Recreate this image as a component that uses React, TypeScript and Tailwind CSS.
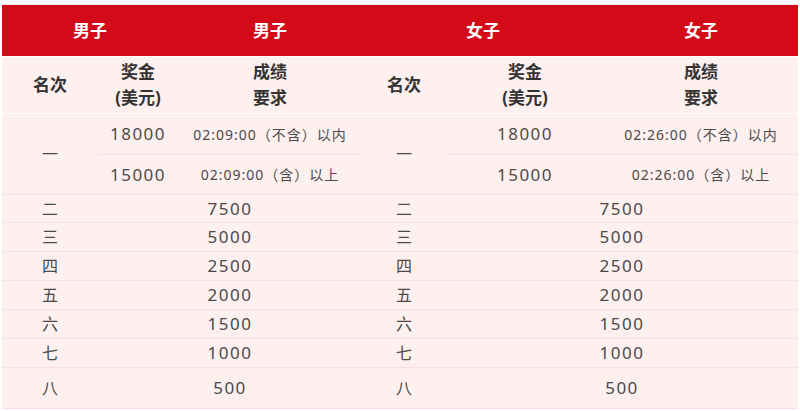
const FONT = "font-['Noto_Sans','Noto_Sans_CJK_SC',sans-serif]";

const ranks = [
  { rank: "二", prize: "7500", h: "h-[28px]" },
  { rank: "三", prize: "5000", h: "h-[29px]" },
  { rank: "四", prize: "2500", h: "h-[29px]" },
  { rank: "五", prize: "2000", h: "h-[29px]" },
  { rank: "六", prize: "1500", h: "h-[29px]" },
  { rank: "七", prize: "1000", h: "h-[29px]" },
  { rank: "八", prize: "500", h: "h-[41px]" },
];

const head = "bg-[#d30a18] text-white text-[17px] font-bold text-center align-middle h-[52px] border-b border-white p-0";
const sub = "bg-[#fff0f0] text-[#333] text-[17px] font-bold text-center align-middle leading-[26px] h-[57px] border-b border-white p-0";
const cell = "bg-[#fff0f0] text-[#4a4a4a] text-center align-middle p-0 border-b border-[#fcdede]";
const num = "text-[17px] tracking-[1.5px]";
const time = "text-[14px] tracking-[1px]";

export default function App() {
  return (
    <div className={`w-[800px] h-[411px] bg-white pt-[4px] px-[2px] ${FONT}`}>
      <table className="w-[796px] table-fixed border-collapse border-t border-[#e8e8e8]">
        <colgroup>
          <col className="w-[96px]" />
          <col className="w-[80px]" />
          <col className="w-[184px]" />
          <col className="w-[84px]" />
          <col className="w-[158px]" />
          <col className="w-[194px]" />
        </colgroup>
        <thead>
          <tr>
            <th colSpan={2} className={head}>男子</th>
            <th className={head}>男子</th>
            <th colSpan={2} className={head}>女子</th>
            <th className={head}>女子</th>
          </tr>
          <tr>
            <th className={sub}>名次</th>
            <th className={sub}>
              奖金
              <br />
              (美元)
            </th>
            <th className={sub}>
              成绩
              <br />
              要求
            </th>
            <th className={sub}>名次</th>
            <th className={sub}>
              奖金
              <br />
              (美元)
            </th>
            <th className={sub}>
              成绩
              <br />
              要求
            </th>
          </tr>
        </thead>
        <tbody>
          <tr className="h-[41px]">
            <td rowSpan={2} className={`${cell} text-[16px]`}>一</td>
            <td className={`${cell} ${num}`}>18000</td>
            <td className={`${cell} ${time}`}>02:09:00（不含）以内</td>
            <td rowSpan={2} className={`${cell} text-[16px]`}>一</td>
            <td className={`${cell} ${num}`}>18000</td>
            <td className={`${cell} ${time}`}>02:26:00（不含）以内</td>
          </tr>
          <tr className="h-[40px]">
            <td className={`${cell} ${num}`}>15000</td>
            <td className={`${cell} ${time}`}>02:09:00（含）以上</td>
            <td className={`${cell} ${num}`}>15000</td>
            <td className={`${cell} ${time}`}>02:26:00（含）以上</td>
          </tr>
          {ranks.map((r) => (
            <tr key={r.rank} className={r.h}>
              <td className={`${cell} text-[16px]`}>{r.rank}</td>
              <td colSpan={2} className={`${cell} ${num}`}>{r.prize}</td>
              <td className={`${cell} text-[16px]`}>{r.rank}</td>
              <td colSpan={2} className={`${cell} ${num}`}>{r.prize}</td>
            </tr>
          ))}
        </tbody>
      </table>
    </div>
  );
}
